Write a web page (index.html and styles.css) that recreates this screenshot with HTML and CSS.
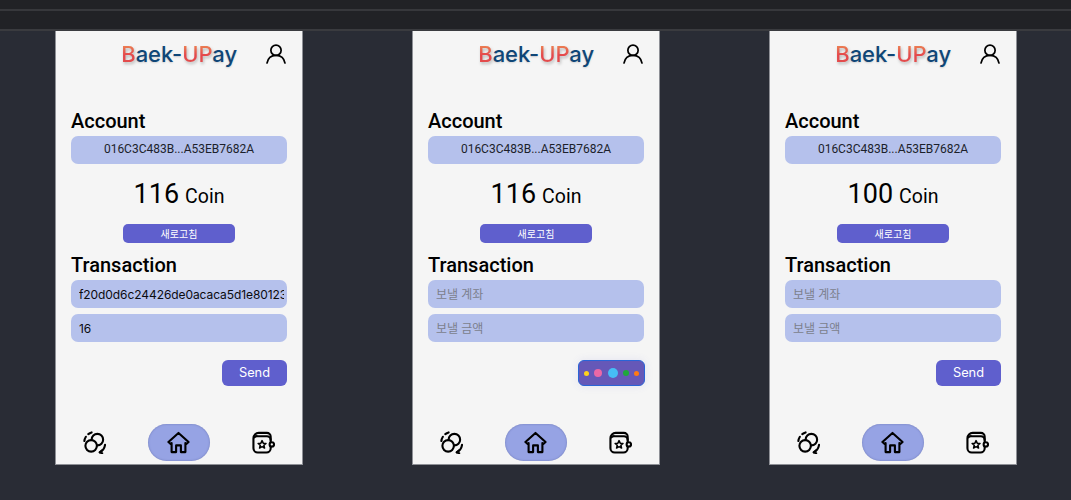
FILE: index.html
```html
<!DOCTYPE html>
<html lang="ko">
<head>
<meta charset="utf-8">
<title>Baek-UPay</title>
<link rel="stylesheet" href="styles.css">
</head>
<body>
<svg class="defs" width="0" height="0" aria-hidden="true">
  <defs>
    <symbol id="user" viewBox="0 0 24 24"><circle cx="12" cy="8" r="5.600"/><path d="M2 22.500c1-5.600 5-8.900 10-8.900s9 3.300 10 8.900"/></symbol>
    <symbol id="swap" viewBox="0 0 24 24"><circle cx="15" cy="9" r="6"/><circle class="knob" cx="8.500" cy="15.500" r="6"/><path d="M1.400 10.500A10.500 10.500 0 0 1 3 6M5.500 3.300A10.500 10.500 0 0 1 9 1.500"/><path d="M23 14.500A10.500 10.500 0 0 1 17.500 22.300"/><path d="m20 20-2.500 2.300 2.500 1"/></symbol>
    <symbol id="home" viewBox="0 0 24 24"><path d="M1.500 11.500 12 2l10.500 9.500-2.300 2-1-.9V22h-4.700v-7H9.500v7H4.800v-9.400l-1 .9z"/></symbol>
    <symbol id="wallet" viewBox="0 0 24 24"><path d="M19.500 18V6a4 4 0 0 0-4-4H7a5.500 5.500 0 0 0-5.500 5.500V18A4.500 4.500 0 0 0 6 22.500h9a4.500 4.500 0 0 0 4.500-4.500z"/><path d="M2.500 6.700A3.500 3.500 0 0 1 6 5.500h9.500A4 4 0 0 1 19.500 9.500"/><circle class="knob" cx="20.700" cy="14" r="2.300"/><path class="thin" d="m10.500 10 1.200 2.700 2.900.3-2.200 1.900.7 2.900-2.600-1.500-2.600 1.500.7-2.900-2.200-1.900 2.900-.3z"/></symbol>
  </defs>
</svg>
<div class="topbar"><div class="topline"></div></div>
<main class="screens">

  <section class="phone">
    <header class="head">
      <h1 class="logo"><span class="mark">B</span><span class="ink">aek-</span><span class="mark">UP</span><span class="ink">ay</span></h1>
      <svg class="user-icon"><use href="#user"/></svg>
    </header>
    <h2 class="title first">Account</h2>
    <div class="field center">016C3C483B...A53EB7682A</div>
    <p class="balance"><span class="amount">116</span> <span class="coin">Coin</span></p>
    <button class="refresh">새로고침</button>
    <h2 class="title second">Transaction</h2>
    <input class="field entry" value="f20d0d6c24426de0acaca5d1e80123" aria-label="보낼 계좌">
    <input class="field entry gap" value="16" aria-label="보낼 금액">
    <div class="actions"><button class="send">Send</button></div>
    <nav class="nav">
      <svg class="nav-icon"><use href="#swap"/></svg>
      <span class="pill"><svg class="nav-icon"><use href="#home"/></svg></span>
      <svg class="nav-icon"><use href="#wallet"/></svg>
    </nav>
  </section>

  <section class="phone">
    <header class="head">
      <h1 class="logo"><span class="mark">B</span><span class="ink">aek-</span><span class="mark">UP</span><span class="ink">ay</span></h1>
      <svg class="user-icon"><use href="#user"/></svg>
    </header>
    <h2 class="title first">Account</h2>
    <div class="field center">016C3C483B...A53EB7682A</div>
    <p class="balance"><span class="amount">116</span> <span class="coin">Coin</span></p>
    <button class="refresh">새로고침</button>
    <h2 class="title second">Transaction</h2>
    <input class="field entry" placeholder="보낼 계좌">
    <input class="field entry gap" placeholder="보낼 금액">
    <div class="actions">
      <div class="loader"><i class="dot d1"></i><i class="dot d2"></i><i class="dot d3"></i><i class="dot d4"></i><i class="dot d5"></i></div>
    </div>
    <nav class="nav">
      <svg class="nav-icon"><use href="#swap"/></svg>
      <span class="pill"><svg class="nav-icon"><use href="#home"/></svg></span>
      <svg class="nav-icon"><use href="#wallet"/></svg>
    </nav>
  </section>

  <section class="phone">
    <header class="head">
      <h1 class="logo"><span class="mark">B</span><span class="ink">aek-</span><span class="mark">UP</span><span class="ink">ay</span></h1>
      <svg class="user-icon"><use href="#user"/></svg>
    </header>
    <h2 class="title first">Account</h2>
    <div class="field center">016C3C483B...A53EB7682A</div>
    <p class="balance"><span class="amount">100</span> <span class="coin">Coin</span></p>
    <button class="refresh">새로고침</button>
    <h2 class="title second">Transaction</h2>
    <input class="field entry" placeholder="보낼 계좌">
    <input class="field entry gap" placeholder="보낼 금액">
    <div class="actions"><button class="send">Send</button></div>
    <nav class="nav">
      <svg class="nav-icon"><use href="#swap"/></svg>
      <span class="pill"><svg class="nav-icon"><use href="#home"/></svg></span>
      <svg class="nav-icon"><use href="#wallet"/></svg>
    </nav>
  </section>

</main>
</body>
</html>
```
FILE: styles.css
```css
* { box-sizing: border-box; }
html, body { margin: 0; height: 500px; overflow: hidden; }
body {
  background: #292c35;
  font-family: "Inter", "Noto Sans CJK KR", sans-serif;
  color: #000;
}
.defs { display: block; height: 0; }
.topbar {
  height: 31px;
  background: #212226;
  padding-top: 9px;
  border-bottom: 2px solid #3a3b3f;
}
.topline { height: 2px; background: #37383c; }
.screens {
  display: flex;
  gap: 109px;
  padding-left: 55px;
}
.phone {
  width: 248px;
  height: 434px;
  background: #f5f5f5;
  border: 1px solid #8e9096;
  border-top: 0;
  padding: 0 15px;
  display: flex;
  flex-direction: column;
}
.head {
  height: 44px;
  display: flex;
  align-items: center;
  justify-content: flex-end;
  padding-top: 1px;
}
.logo {
  margin: 0 28px 0 0;
  padding-top: 2px;
  font: 500 22px/1.2 "Inter", sans-serif;
  letter-spacing: -.08px;
}
.ink { color: #0f4677; text-shadow: 0 1px 2px rgba(0,0,0,.15); }
.mark {
  color: #e2504c;
  background: linear-gradient(180deg, #ef9a55 0%, #e4474c 55%, #e2504c 100%);
  -webkit-background-clip: text;
  background-clip: text;
  -webkit-text-fill-color: transparent;
  filter: drop-shadow(1px 2px 1.500px rgba(0,0,0,.25));
}
.user-icon {
  width: 22px;
  height: 22px;
  fill: none;
  stroke: #000;
  stroke-width: 1.900;
  overflow: visible;
}
.title {
  margin: 0;
  font: 500 20px/24px "Roboto", sans-serif;
}
.first { margin-top: 34px; }
.second { margin-top: 10px; }
.field {
  display: block;
  width: 100%;
  height: 28px;
  margin-top: 3px;
  border: 0;
  outline: 0;
  border-radius: 7px;
  background: #b5c1ec;
  font-size: 12px;
  line-height: 27px;
  white-space: nowrap;
}
.center { text-align: center; color: #1c1f2b; font-family: "Roboto", sans-serif; }
.entry {
  padding: 0 3px 0 8px;
  color: #0b0b0f;
  font-family: "Inter", "Noto Sans CJK KR", sans-serif;
  letter-spacing: -.08px;
}
.entry::placeholder { color: #7c7f8c; opacity: 1; }
.gap { margin-top: 6px; }
.balance {
  margin: 12px 0 0;
  height: 36px;
  line-height: 36px;
  text-align: center;
  font-family: "Roboto", sans-serif;
}
.amount { font-size: 27px; font-weight: 400; margin-right: 2px; }
.coin { font-size: 19.500px; }
.refresh {
  display: block;
  width: 112px;
  height: 19px;
  margin: 12px auto 0;
  padding: 0;
  border: 0;
  border-radius: 5px;
  background: #5f5fcd;
  color: #fff;
  font: 400 10px/19px "Noto Sans CJK KR", sans-serif;
}
.actions {
  display: flex;
  justify-content: flex-end;
  height: 26px;
  margin-top: 18px;
}
.send {
  width: 65px;
  height: 26px;
  padding: 0;
  border: 0;
  border-radius: 6px;
  background: #5f5fcd;
  color: #fff;
  font: 400 12.800px/26px "Inter", sans-serif;
}
.loader {
  width: 67px;
  height: 26px;
  margin-right: -1px;
  padding: 0 5px;
  display: flex;
  align-items: center;
  justify-content: space-between;
  border-radius: 6px;
  background: #6558b8;
  border: 1.500px solid #2a64d6;
  box-shadow: 0 0 8px rgba(95,95,205,.12);
}
.dot { display: block; border-radius: 50%; }
.d1 { width: 5px; height: 5px; background: #ffd21c; }
.d2 { width: 8px; height: 8px; background: #ea68a6; }
.d3 { width: 10px; height: 10px; background: #46bdf5; }
.d4 { width: 6px; height: 6px; background: #1fa83c; }
.d5 { width: 5px; height: 5px; background: #ff7a12; }
.nav {
  margin-top: auto;
  margin-bottom: 3px;
  height: 37px;
  display: flex;
  align-items: center;
  justify-content: space-between;
  padding: 0 12px;
}
.pill {
  width: 62px;
  height: 37px;
  margin-left: -1px;
  border-radius: 19px;
  background: #96a3e4;
  box-shadow: inset 0 0 2px rgba(60,70,130,.5);
  display: flex;
  align-items: center;
  justify-content: center;
}
.nav-icon {
  width: 23px;
  height: 23px;
  fill: none;
  stroke: #000;
  stroke-width: 2.200;
  stroke-linecap: round;
  stroke-linejoin: round;
  overflow: visible;
}
.thin { stroke-width: 1.600; }
.knob { fill: #f5f5f5; }
```
